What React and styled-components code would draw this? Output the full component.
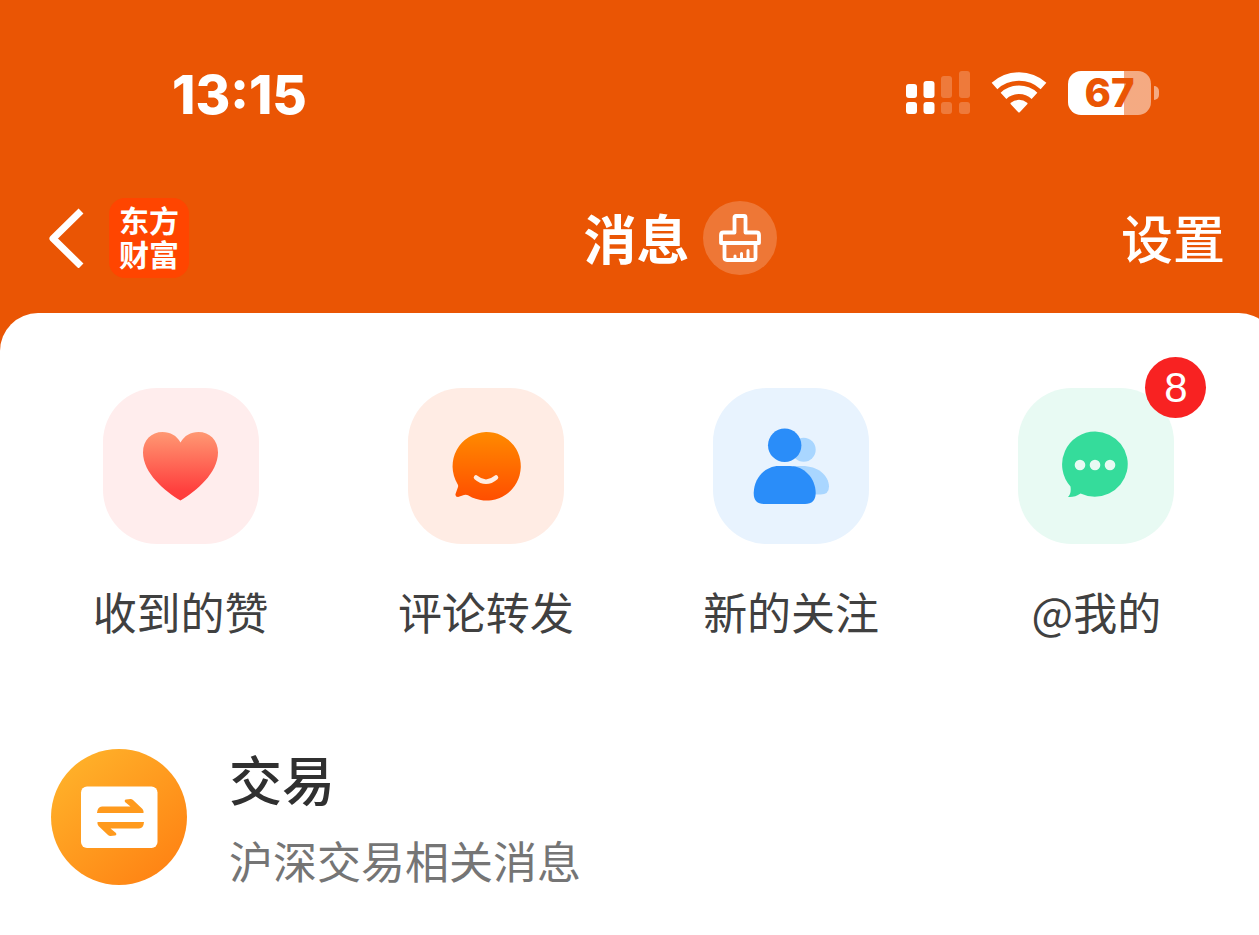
// src/pages/MessagePage.jsx
import React from "react";
import styled, { createGlobalStyle } from "styled-components";

const GlobalStyle = createGlobalStyle`
  * { box-sizing: border-box; }
  body {
    margin: 0;
    background-color: #fff;
    font-family: "Noto Sans CJK SC", "Noto Sans", sans-serif;
    overflow-x: hidden;
  }
  button {
    padding: 0;
    border: none;
    background: none;
    color: inherit;
    font-family: inherit;
    cursor: pointer;
  }
  a { color: inherit; text-decoration: none; }
  svg { display: block; }
`;

const Page = styled.div`
  overflow: hidden;
`;

/* the screen runs a little past the right edge of the window */
const Screen = styled.div`
  margin-right: -18px;
  background-color: #ea5504;
`;

const StatusBar = styled.div`
  display: flex;
  align-items: center;
  justify-content: space-between;
  padding: 63px 118px 0 172px;
  color: #fff;
`;

const Clock = styled.time`
  padding-top: 4px;
  font-family: Inter, sans-serif;
  font-size: 53px;
  line-height: 56px;
  font-weight: 800;
`;

const StatusIcons = styled.div`
  display: flex;
  align-items: center;
  gap: 21px;
`;

const BatteryWrapper = styled.div`
  display: flex;
  align-items: center;
  gap: 3px;
`;

const BatteryBody = styled.div`
  width: 83px;
  height: 44px;
  border-radius: 13px;
  text-align: center;
  font-family: Inter, sans-serif;
  font-size: 40px;
  line-height: 44px;
  font-weight: 800;
  color: #ea5504;
`;

const BatteryTip = styled.div`
  width: 5px;
  height: 14px;
  border-radius: 0 7px 7px 0;
  background-color: rgba(255, 255, 255, 0.5);
`;

const NavBar = styled.header`
  display: grid;
  grid-template-columns: 1fr auto 1fr;
  align-items: center;
  padding: 75px 52px 35px 48px;
  color: #fff;
`;

const NavSide = styled.div`
  display: flex;
  align-items: center;
  gap: 24px;
`;

const NavActions = styled(NavSide)`
  justify-content: space-between;
  padding-left: 13px;
`;

const AppLogo = styled.a`
  width: 80px;
  height: 80px;
  padding: 4px 10px 0;
  border-radius: 16px;
  background-color: #ff4500;
  text-align: center;
  font-size: 30px;
  line-height: 34px;
  font-weight: 700;
`;

const Title = styled.h1`
  margin: 0;
  padding-bottom: 3px;
  font-size: 53px;
  line-height: 72px;
  font-weight: 700;
`;

const ClearButton = styled.button`
  display: flex;
  align-items: center;
  justify-content: center;
  width: 74px;
  height: 74px;
  border-radius: 50%;
  background-color: rgba(255, 255, 255, 0.2);
`;

const SettingsButton = styled.button`
  padding-bottom: 3px;
  font-size: 52px;
  line-height: 72px;
  font-weight: 500;
`;

const Sheet = styled.main`
  padding: 75px 28px 44px;
  border-radius: 38px 38px 0 0;
  background-color: #fff;
`;

const Shortcuts = styled.nav`
  display: grid;
  grid-template-columns: repeat(4, 1fr);
`;

const Shortcut = styled.a`
  display: flex;
  flex-direction: column;
  align-items: center;
  gap: 37px;
  font-size: 44px;
  line-height: 60px;
  color: #404040;
`;

const Tile = styled.div`
  position: relative;
  width: 156px;
  height: 156px;
  border-radius: 54px;
  background-color: ${props => props.$tint};
`;

const Badge = styled.span`
  position: absolute;
  top: -31px;
  right: -32px;
  width: 61px;
  height: 61px;
  border-radius: 50%;
  background-color: #f82222;
  color: #fff;
  text-align: center;
  font-family: "Liberation Sans", Arial, sans-serif;
  font-size: 42px;
  line-height: 62px;
`;

const MessageRow = styled.a`
  display: flex;
  align-items: center;
  gap: 42px;
  margin-top: 101px;
  padding-left: 23px;
`;

const MessageText = styled.div`
  display: flex;
  flex-direction: column;
  gap: 16px;
  padding-bottom: 2px;
`;

const MessageTitle = styled.h2`
  margin: 0;
  font-size: 53px;
  line-height: 72px;
  font-weight: 500;
  color: #303030;
`;

const MessageDesc = styled.p`
  margin: 0;
  font-size: 44px;
  line-height: 60px;
  color: #757575;
`;

const SignalIcon = () => (
  <svg width="64" height="44" viewBox="0 0 64 44" fill="#fff">
    <rect x="0" y="13" width="11" height="14" rx="3" />
    <rect x="0" y="31" width="11" height="12" rx="3" />
    <rect x="17.5" y="10" width="11" height="17" rx="3" />
    <rect x="17.5" y="31" width="11" height="12" rx="3" />
    <g opacity="0.22">
      <rect x="35" y="5" width="11" height="22" rx="3" />
      <rect x="35" y="31" width="11" height="12" rx="3" />
      <rect x="53" y="0" width="11" height="27" rx="3" />
      <rect x="53" y="31" width="11" height="12" rx="3" />
    </g>
  </svg>
);

const WifiIcon = () => (
  <svg width="56" height="44" viewBox="0 0 56 44" fill="none" stroke="#fff">
    <path d="M3.5 15A36.500 36.500 0 0 1 52.500 15" strokeWidth="8.500" />
    <path d="M12.500 24.800A23 23 0 0 1 43.500 24.800" strokeWidth="8.500" />
    <path
      d="M28 40.500L20.500 32.500A12 12 0 0 1 35.500 32.500Z"
      fill="#fff"
      strokeWidth="2"
      strokeLinejoin="round"
    />
  </svg>
);

const BackIcon = () => (
  <svg width="37" height="60" viewBox="0 0 37 60" fill="none" stroke="#fff" strokeWidth="7">
    <path d="M33 3L5 30.500L33 58" strokeLinejoin="round" />
  </svg>
);

const BrushIcon = () => (
  <svg
    width="42"
    height="50"
    viewBox="0 0 42 50"
    fill="none"
    stroke="#fff"
    strokeWidth="3.8"
    strokeLinejoin="round"
    strokeLinecap="round"
  >
    <path d="M17 3H25Q26.500 3 26.500 4.500V19.500H37.500Q40 19.500 40 22V30H2V22Q2 19.500 4.500 19.500H15.500V4.500Q15.500 3 17 3Z" />
    <path d="M5.500 30V44.500Q5.500 47 8 47H34Q36.500 47 36.500 44.500V30" />
    <path d="M16 46V43M22.500 46V40.500M29 46V37.500" strokeWidth="3" />
  </svg>
);

const HeartIcon = () => (
  <svg width="156" height="156" viewBox="0 0 156 156">
    <defs>
      <linearGradient id="heart" x1="0" y1="0" x2="0" y2="1">
        <stop offset="0" stopColor="#ff9873" />
        <stop offset="0.85" stopColor="#ff403e" />
        <stop offset="1" stopColor="#ff3b3b" />
      </linearGradient>
    </defs>
    <path
      d="M77.500 112.500C62 103.500 40 85 40 64.500C40 52 48.500 44 59.500 44C67.500 44 73.500 47.500 77.500 54.500C81.500 47.500 87.500 44 95.500 44C106.500 44 115 52 115 64.500C115 85 93 103.500 77.500 112.500Z"
      fill="url(#heart)"
    />
  </svg>
);

const CommentIcon = () => (
  <svg width="156" height="156" viewBox="0 0 156 156">
    <defs>
      <linearGradient id="comment" x1="0" y1="0" x2="0" y2="1">
        <stop offset="0" stopColor="#ff8a00" />
        <stop offset="1" stopColor="#ff4e00" />
      </linearGradient>
    </defs>
    <path
      d="M78 44A34.300 34.300 0 1 1 60.500 107.500Q58.500 106.500 56 107L50 109Q47 109 47.500 106L50 99Q50.500 97.500 49.500 96A34.300 34.300 0 0 1 78 44Z"
      fill="url(#comment)"
    />
    <path d="M68 89.500Q78 98 88 89.500" fill="none" stroke="#ffece2" strokeWidth="4.500" strokeLinecap="round" />
  </svg>
);

const FollowersIcon = () => (
  <svg width="156" height="156" viewBox="0 0 156 156">
    <g fill="#a9d6ff">
      <circle cx="90.700" cy="61.700" r="12" />
      <path d="M80 78H89C105 78 115.500 87 116 98.500Q116 106.500 107.500 106.500H80Z" />
    </g>
    <g fill="#2a8df9">
      <circle cx="71.700" cy="57.300" r="16.700" />
      <path d="M66 78H77C91 78 102.500 90 102.700 105Q102.500 116 92 116H51Q40.700 116 40.700 105C41 90 52 78 66 78Z" />
    </g>
  </svg>
);

const MentionIcon = () => (
  <svg width="156" height="156" viewBox="0 0 156 156">
    <path
      d="M77.300 43.500A33 32.600 0 1 1 62.500 105.500Q57 109.500 50 109Q53.500 105.500 52.500 98.500A33 33 0 0 1 77.300 43.500Z"
      fill="#35dc9b"
    />
    <g fill="#e8faf3">
      <circle cx="62" cy="77" r="5.300" />
      <circle cx="77" cy="77" r="5.300" />
      <circle cx="92" cy="77" r="5.300" />
    </g>
  </svg>
);

const TradeIcon = () => (
  <svg width="136" height="136" viewBox="0 0 136 136">
    <defs>
      <linearGradient id="trade" x1="0.150" y1="0.100" x2="0.850" y2="0.900">
        <stop offset="0" stopColor="#ffb029" />
        <stop offset="1" stopColor="#ff8414" />
      </linearGradient>
    </defs>
    <circle cx="68" cy="68" r="68" fill="url(#trade)" />
    <rect x="30" y="37.500" width="76.500" height="61.500" rx="6" fill="#fff" />
    <g fill="#ff9a1d">
      <path d="M46 64Q46.500 57.500 51 57.500H79.500L74 53Q73 51 75 50.500L79.500 50Q81 50 82 51L91.500 60Q93 62 92.500 64Z" />
      <path
        transform="rotate(180 69.500 68.500)"
        d="M46 64Q46.500 57.500 51 57.500H79.500L74 53Q73 51 75 50.500L79.500 50Q81 50 82 51L91.500 60Q93 62 92.500 64Z"
      />
    </g>
  </svg>
);

const Battery = ({ level }) => (
  <BatteryWrapper>
    <BatteryBody
      style={{
        background: `linear-gradient(90deg, #fff ${level}%, rgba(255, 255, 255, 0.5) ${level}%)`
      }}
    >
      {level}
    </BatteryBody>
    <BatteryTip />
  </BatteryWrapper>
);

const shortcuts = [
  { key: "likes", label: "收到的赞", tint: "#ffeded", icon: <HeartIcon /> },
  { key: "comments", label: "评论转发", tint: "#ffece4", icon: <CommentIcon /> },
  { key: "followers", label: "新的关注", tint: "#e8f3fe", icon: <FollowersIcon /> },
  { key: "mentions", label: "@我的", tint: "#e8faf3", icon: <MentionIcon />, count: 8 }
];

const App = () => {
  return (
    <Page>
      <GlobalStyle />
      <Screen>
        <StatusBar>
          <Clock>13:15</Clock>
          <StatusIcons>
            <SignalIcon />
            <WifiIcon />
            <Battery level={67} />
          </StatusIcons>
        </StatusBar>

        <NavBar>
          <NavSide>
            <button type="button" aria-label="返回">
              <BackIcon />
            </button>
            <AppLogo href="#home">东方财富</AppLogo>
          </NavSide>
          <Title>消息</Title>
          <NavActions>
            <ClearButton type="button" aria-label="清除未读">
              <BrushIcon />
            </ClearButton>
            <SettingsButton type="button">设置</SettingsButton>
          </NavActions>
        </NavBar>

        <Sheet>
          <Shortcuts>
            {shortcuts.map(item => (
              <Shortcut key={item.key} href={`#${item.key}`}>
                <Tile $tint={item.tint}>
                  {item.icon}
                  {item.count && <Badge>{item.count}</Badge>}
                </Tile>
                <span>{item.label}</span>
              </Shortcut>
            ))}
          </Shortcuts>

          <MessageRow href="#trade-messages">
            <TradeIcon />
            <MessageText>
              <MessageTitle>交易</MessageTitle>
              <MessageDesc>沪深交易相关消息</MessageDesc>
            </MessageText>
          </MessageRow>
        </Sheet>
      </Screen>
    </Page>
  );
};

export default App;
